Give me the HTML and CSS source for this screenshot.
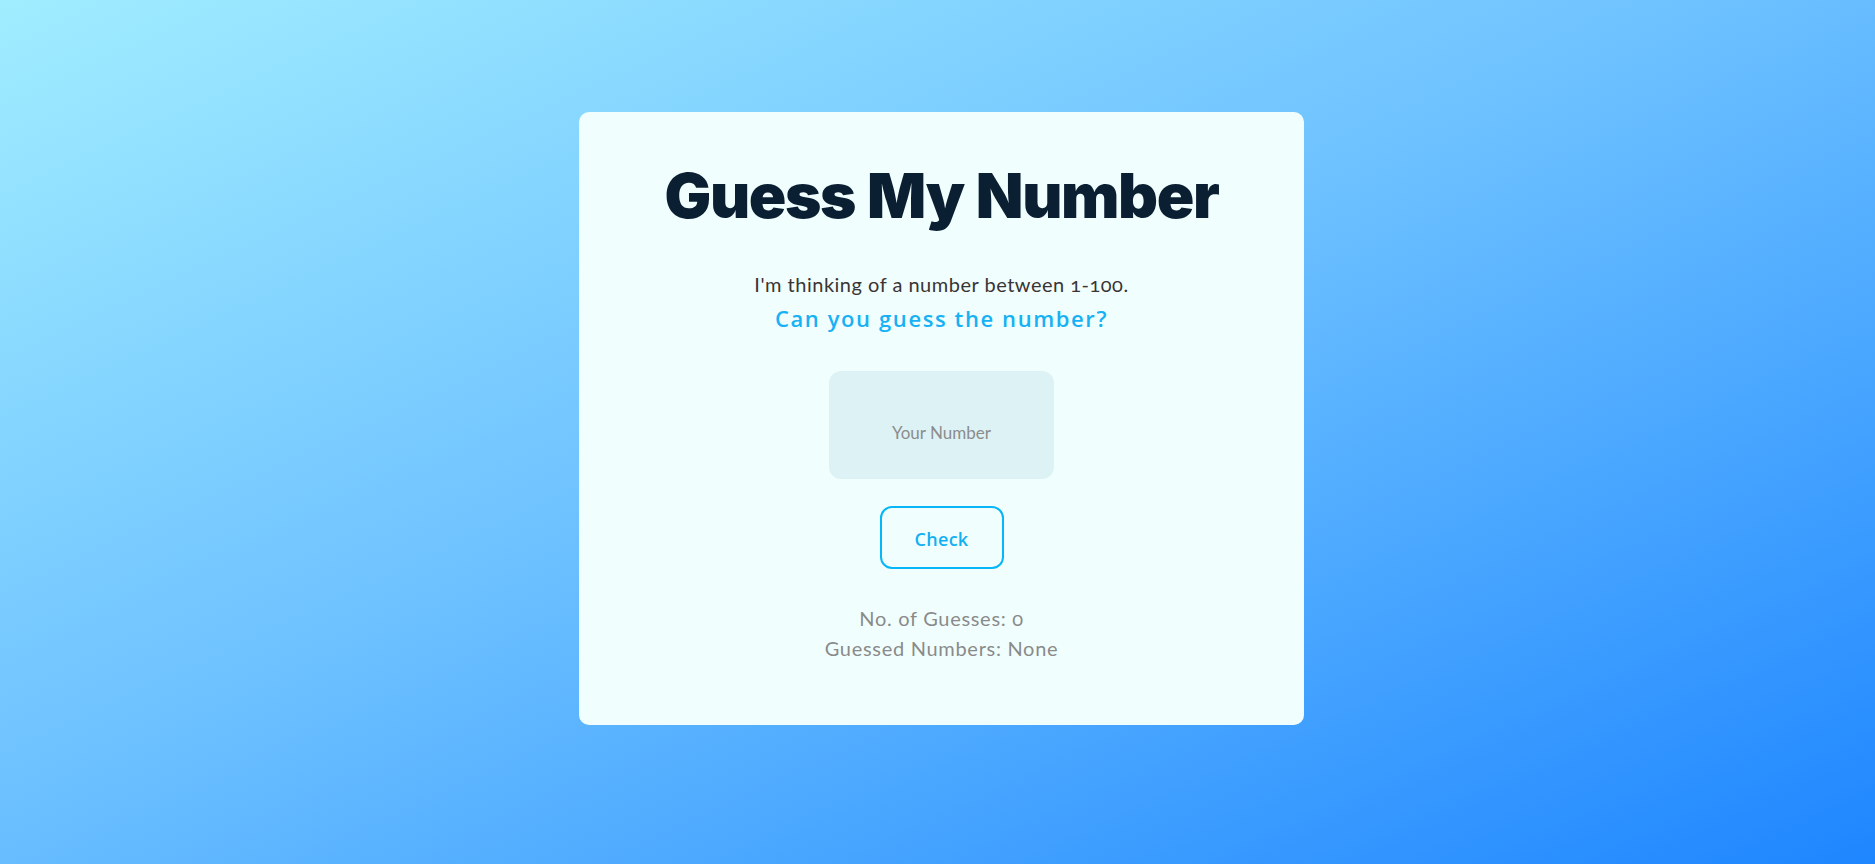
FILE: index.html
```html
<!DOCTYPE html>
<html lang="en">
<head>
<meta charset="utf-8">
<title>Guess My Number</title>
<link rel="stylesheet" href="styles.css">
</head>
<body>
<main class="page">
  <section class="card">
    <h1 class="title">Guess My Number</h1>
    <p class="intro">I'm thinking of a number between 1-100.</p>
    <p class="prompt">Can you guess the number?</p>
    <input class="guess-input" type="text" placeholder="Your Number">
    <button class="check-btn" type="button">Check</button>
    <div class="stats">
      <p class="stat">No. of Guesses: 0</p>
      <p class="stat">Guessed Numbers: None</p>
    </div>
  </section>
</main>
</body>
</html>
```
FILE: styles.css
```css
* { box-sizing: border-box; }

html, body {
  margin: 0;
  padding: 0;
}

body {
  min-height: 100vh;
  background: linear-gradient(to bottom right, #a0edff 0%, #6ec2ff 45%, #1e86ff 100%);
  font-family: "Lato", "Open Sans", sans-serif;
}

.page {
  display: flex;
  justify-content: center;
  padding: 112px 0 0 8px;
}

.card {
  width: 725px;
  height: 613px;
  background: #f0fffe;
  border-radius: 10px;
  padding: 52px 0 0;
  display: flex;
  flex-direction: column;
  align-items: center;
}

.title {
  margin: 0;
  font-family: "Inter", "Lato", sans-serif;
  font-size: 62px;
  line-height: 64px;
  font-weight: 900;
  color: #0b1f32;
  letter-spacing: -1.4px;
  word-spacing: 1px;
}

.intro {
  margin: 42px 0 0;
  font-size: 20px;
  line-height: 28px;
  color: #3b3434;
  letter-spacing: 0.5px;
  font-variant-numeric: oldstyle-nums;
}

.prompt {
  margin: 5px 0 0;
  font-family: "Open Sans", "Lato", sans-serif;
  font-size: 22px;
  line-height: 30px;
  font-weight: 600;
  color: #17b1f4;
  letter-spacing: 1.6px;
}

.guess-input {
  margin-top: 38px;
  width: 225px;
  height: 108px;
  border: none;
  border-radius: 12px;
  background: #ddf2f5;
  padding: 14px 0 0;
  text-align: center;
  font-family: "Lato", sans-serif;
  font-size: 17px;
  color: #333;
  outline: none;
}

.guess-input::placeholder {
  color: #8c8c8c;
}

.check-btn {
  margin-top: 27px;
  width: 124px;
  height: 63px;
  border: 2px solid #06b6f6;
  border-radius: 12px;
  background: transparent;
  padding: 2px 0 0;
  font-family: "Open Sans", "Lato", sans-serif;
  font-size: 18px;
  font-weight: 600;
  color: #12b0f2;
  letter-spacing: 0.3px;
  cursor: pointer;
}

.stats {
  margin-top: 34px;
  text-align: center;
}

.stat {
  margin: 0;
  font-size: 20px;
  line-height: 30px;
  color: #8a8a8a;
  letter-spacing: 0.7px;
  font-variant-numeric: oldstyle-nums;
}
```
